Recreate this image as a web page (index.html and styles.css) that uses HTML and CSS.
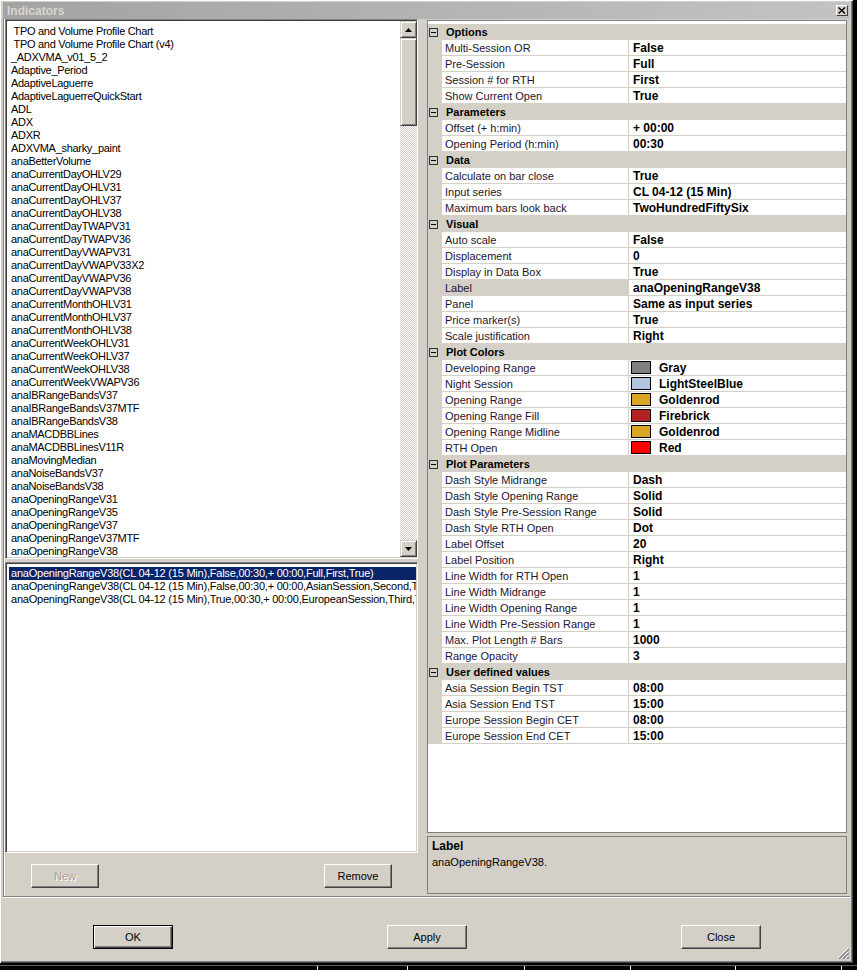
FILE: index.html
```html
<!DOCTYPE html>
<html lang="en">
<head>
  <meta charset="UTF-8" />
  <title>Indicators</title>
  <link rel="stylesheet" href="styles.css">
</head>
<body>

<div class="window">
  <div class="titlebar">
    <span class="caption">Indicators</span>
    <span class="close-btn">
      <svg width="8" height="7" viewBox="0 0 8 7"><path d="M0.5 0.5 L7 6.5 M7 0.5 L0.5 6.5" stroke="#000" stroke-width="1.4" fill="none"/></svg>
    </span>
  </div>

  <div class="main">
    <div class="left">
      <div class="listbox list-indicators">
        <div class="items">
          <div class="item"> TPO and Volume Profile Chart</div>
          <div class="item"> TPO and Volume Profile Chart (v4)</div>
          <div class="item">_ADXVMA_v01_5_2</div>
          <div class="item">Adaptive_Period</div>
          <div class="item">AdaptiveLaguerre</div>
          <div class="item">AdaptiveLaguerreQuickStart</div>
          <div class="item">ADL</div>
          <div class="item">ADX</div>
          <div class="item">ADXR</div>
          <div class="item">ADXVMA_sharky_paint</div>
          <div class="item">anaBetterVolume</div>
          <div class="item">anaCurrentDayOHLV29</div>
          <div class="item">anaCurrentDayOHLV31</div>
          <div class="item">anaCurrentDayOHLV37</div>
          <div class="item">anaCurrentDayOHLV38</div>
          <div class="item">anaCurrentDayTWAPV31</div>
          <div class="item">anaCurrentDayTWAPV36</div>
          <div class="item">anaCurrentDayVWAPV31</div>
          <div class="item">anaCurrentDayVWAPV33X2</div>
          <div class="item">anaCurrentDayVWAPV36</div>
          <div class="item">anaCurrentDayVWAPV38</div>
          <div class="item">anaCurrentMonthOHLV31</div>
          <div class="item">anaCurrentMonthOHLV37</div>
          <div class="item">anaCurrentMonthOHLV38</div>
          <div class="item">anaCurrentWeekOHLV31</div>
          <div class="item">anaCurrentWeekOHLV37</div>
          <div class="item">anaCurrentWeekOHLV38</div>
          <div class="item">anaCurrentWeekVWAPV36</div>
          <div class="item">anaIBRangeBandsV37</div>
          <div class="item">anaIBRangeBandsV37MTF</div>
          <div class="item">anaIBRangeBandsV38</div>
          <div class="item">anaMACDBBLines</div>
          <div class="item">anaMACDBBLinesV11R</div>
          <div class="item">anaMovingMedian</div>
          <div class="item">anaNoiseBandsV37</div>
          <div class="item">anaNoiseBandsV38</div>
          <div class="item">anaOpeningRangeV31</div>
          <div class="item">anaOpeningRangeV35</div>
          <div class="item">anaOpeningRangeV37</div>
          <div class="item">anaOpeningRangeV37MTF</div>
          <div class="item">anaOpeningRangeV38</div>
        </div>
        <div class="vscroll">
          <div class="sb-btn"><svg width="7" height="4" viewBox="0 0 7 4"><path d="M3.5 0 L7 4 L0 4 Z" fill="#000"/></svg></div>
          <div class="sb-thumb"></div>
          <div class="sb-track"></div>
          <div class="sb-btn"><svg width="7" height="4" viewBox="0 0 7 4"><path d="M0 0 L7 0 L3.5 4 Z" fill="#000"/></svg></div>
        </div>
      </div>

      <div class="listbox list-instances">
        <div class="items">
          <div class="item selected">anaOpeningRangeV38(CL 04-12 (15 Min),False,00:30,+ 00:00,Full,First,True)</div>
          <div class="item">anaOpeningRangeV38(CL 04-12 (15 Min),False,00:30,+ 00:00,AsianSession,Second,True)</div>
          <div class="item">anaOpeningRangeV38(CL 04-12 (15 Min),True,00:30,+ 00:00,EuropeanSession,Third,True)</div>
        </div>
      </div>

      <div class="left-buttons">
        <button class="btn" disabled>New</button>
        <button class="btn">Remove</button>
      </div>
    </div>

    <div class="right">
      <div class="propgrid">
        <div class="pg-cat"><span class="toggle"></span>Options</div>
        <div class="pg-row"><span class="pg-gutter"></span><span class="pg-name">Multi-Session OR</span><span class="pg-value">False</span></div>
        <div class="pg-row"><span class="pg-gutter"></span><span class="pg-name">Pre-Session</span><span class="pg-value">Full</span></div>
        <div class="pg-row"><span class="pg-gutter"></span><span class="pg-name">Session # for RTH</span><span class="pg-value">First</span></div>
        <div class="pg-row"><span class="pg-gutter"></span><span class="pg-name">Show Current Open</span><span class="pg-value">True</span></div>

        <div class="pg-cat"><span class="toggle"></span>Parameters</div>
        <div class="pg-row"><span class="pg-gutter"></span><span class="pg-name">Offset (+ h:min)</span><span class="pg-value">+ 00:00</span></div>
        <div class="pg-row"><span class="pg-gutter"></span><span class="pg-name">Opening Period (h:min)</span><span class="pg-value">00:30</span></div>

        <div class="pg-cat"><span class="toggle"></span>Data</div>
        <div class="pg-row"><span class="pg-gutter"></span><span class="pg-name">Calculate on bar close</span><span class="pg-value">True</span></div>
        <div class="pg-row"><span class="pg-gutter"></span><span class="pg-name">Input series</span><span class="pg-value">CL 04-12 (15 Min)</span></div>
        <div class="pg-row"><span class="pg-gutter"></span><span class="pg-name">Maximum bars look back</span><span class="pg-value">TwoHundredFiftySix</span></div>

        <div class="pg-cat"><span class="toggle"></span>Visual</div>
        <div class="pg-row"><span class="pg-gutter"></span><span class="pg-name">Auto scale</span><span class="pg-value">False</span></div>
        <div class="pg-row"><span class="pg-gutter"></span><span class="pg-name">Displacement</span><span class="pg-value">0</span></div>
        <div class="pg-row"><span class="pg-gutter"></span><span class="pg-name">Display in Data Box</span><span class="pg-value">True</span></div>
        <div class="pg-row active"><span class="pg-gutter"></span><span class="pg-name">Label</span><span class="pg-value">anaOpeningRangeV38</span></div>
        <div class="pg-row"><span class="pg-gutter"></span><span class="pg-name">Panel</span><span class="pg-value">Same as input series</span></div>
        <div class="pg-row"><span class="pg-gutter"></span><span class="pg-name">Price marker(s)</span><span class="pg-value">True</span></div>
        <div class="pg-row"><span class="pg-gutter"></span><span class="pg-name">Scale justification</span><span class="pg-value">Right</span></div>

        <div class="pg-cat"><span class="toggle"></span>Plot Colors</div>
        <div class="pg-row"><span class="pg-gutter"></span><span class="pg-name">Developing Range</span><span class="pg-value"><i class="swatch gray"></i>Gray</span></div>
        <div class="pg-row"><span class="pg-gutter"></span><span class="pg-name">Night Session</span><span class="pg-value"><i class="swatch steel"></i>LightSteelBlue</span></div>
        <div class="pg-row"><span class="pg-gutter"></span><span class="pg-name">Opening Range</span><span class="pg-value"><i class="swatch gold"></i>Goldenrod</span></div>
        <div class="pg-row"><span class="pg-gutter"></span><span class="pg-name">Opening Range Fill</span><span class="pg-value"><i class="swatch brick"></i>Firebrick</span></div>
        <div class="pg-row"><span class="pg-gutter"></span><span class="pg-name">Opening Range Midline</span><span class="pg-value"><i class="swatch gold"></i>Goldenrod</span></div>
        <div class="pg-row"><span class="pg-gutter"></span><span class="pg-name">RTH Open</span><span class="pg-value"><i class="swatch red"></i>Red</span></div>

        <div class="pg-cat"><span class="toggle"></span>Plot Parameters</div>
        <div class="pg-row"><span class="pg-gutter"></span><span class="pg-name">Dash Style Midrange</span><span class="pg-value">Dash</span></div>
        <div class="pg-row"><span class="pg-gutter"></span><span class="pg-name">Dash Style Opening Range</span><span class="pg-value">Solid</span></div>
        <div class="pg-row"><span class="pg-gutter"></span><span class="pg-name">Dash Style Pre-Session Range</span><span class="pg-value">Solid</span></div>
        <div class="pg-row"><span class="pg-gutter"></span><span class="pg-name">Dash Style RTH Open</span><span class="pg-value">Dot</span></div>
        <div class="pg-row"><span class="pg-gutter"></span><span class="pg-name">Label Offset</span><span class="pg-value">20</span></div>
        <div class="pg-row"><span class="pg-gutter"></span><span class="pg-name">Label Position</span><span class="pg-value">Right</span></div>
        <div class="pg-row"><span class="pg-gutter"></span><span class="pg-name">Line Width for RTH Open</span><span class="pg-value">1</span></div>
        <div class="pg-row"><span class="pg-gutter"></span><span class="pg-name">Line Width Midrange</span><span class="pg-value">1</span></div>
        <div class="pg-row"><span class="pg-gutter"></span><span class="pg-name">Line Width Opening Range</span><span class="pg-value">1</span></div>
        <div class="pg-row"><span class="pg-gutter"></span><span class="pg-name">Line Width Pre-Session Range</span><span class="pg-value">1</span></div>
        <div class="pg-row"><span class="pg-gutter"></span><span class="pg-name">Max. Plot Length # Bars</span><span class="pg-value">1000</span></div>
        <div class="pg-row"><span class="pg-gutter"></span><span class="pg-name">Range Opacity</span><span class="pg-value">3</span></div>

        <div class="pg-cat"><span class="toggle"></span>User defined values</div>
        <div class="pg-row"><span class="pg-gutter"></span><span class="pg-name">Asia Session Begin TST</span><span class="pg-value">08:00</span></div>
        <div class="pg-row"><span class="pg-gutter"></span><span class="pg-name">Asia Session End TST</span><span class="pg-value">15:00</span></div>
        <div class="pg-row"><span class="pg-gutter"></span><span class="pg-name">Europe Session Begin CET</span><span class="pg-value">08:00</span></div>
        <div class="pg-row"><span class="pg-gutter"></span><span class="pg-name">Europe Session End CET</span><span class="pg-value">15:00</span></div>
      </div>

      <div class="desc">
        <div class="desc-title">Label</div>
        <div class="desc-text">anaOpeningRangeV38.</div>
      </div>
    </div>
  </div>

  <div class="footer">
    <button class="btn wide default">OK</button>
    <button class="btn wide">Apply</button>
    <button class="btn wide">Close</button>
  </div>

  <svg class="grip" width="12" height="12" viewBox="0 0 12 12">
    <path d="M11 1 L1 11 M11 5 L5 11 M11 9 L9 11" stroke="#fff" stroke-width="1" fill="none"/>
    <path d="M12 2 L2 12 M12 6 L6 12 M12 10 L10 12" stroke="#808080" stroke-width="1.4" fill="none"/>
  </svg>
</div>

<div class="chart-strip"></div>

</body>
</html>
```

FILE: styles.css
```css
body {
  margin: 0;
  background: #000;
  font-family: "Liberation Sans", Arial, sans-serif;
  font-size: 11px;
  color: #000;
}

.window {
  position: relative;
  width: 853px;
  height: 963px;
  box-sizing: border-box;
  padding: 2px 3px 3px 3px;
  background: #d4d0c8;
  box-shadow: inset 1px 1px #fff, inset -1px -1px #404040, inset -2px -2px #808080;
  display: flex;
  flex-direction: column;
}

/* title bar (inactive window) */
.titlebar {
  height: 17px;
  background: linear-gradient(to right, #a3a3a3, #c3c3c3);
  display: flex;
  align-items: center;
  justify-content: space-between;
  padding: 0 2px 0 4px;
}

.titlebar .caption {
  font-weight: bold;
  font-size: 12px;
  color: #d8d5cf;
}

.close-btn {
  width: 12px;
  height: 11px;
  box-sizing: border-box;
  background: #d4d0c8;
  border: 1px solid;
  border-color: #fff #404040 #404040 #fff;
  display: flex;
  align-items: center;
  justify-content: center;
}

.main {
  display: flex;
  height: 877px;
  border-bottom: 1px solid #808080;
  box-shadow: 0 1px #fff;
}

.left {
  width: 418px;
  box-sizing: border-box;
  border-left: 1px solid #808080;
  box-shadow: inset 1px 0 #fff;
  padding: 0 3px 0 1px;
  display: flex;
  flex-direction: column;
}

.listbox {
  box-sizing: border-box;
  background: #fff;
  border: 1px solid;
  border-color: #808080 #fff #fff #808080;
  box-shadow: inset 1px 1px #404040, inset -1px -1px #d4d0c8;
  padding: 1px;
  display: flex;
  overflow: hidden;
}

.list-indicators {
  height: 540px;
}

.list-instances {
  height: 291px;
  margin-top: 3px;
}

.items {
  flex: 1;
  overflow: hidden;
}

.list-indicators .items {
  padding: 4px 0 0 4px;
}

.list-instances .items {
  padding: 3px 0 0 2px;
}

.item {
  height: 13px;
  line-height: 13px;
  white-space: pre;
  letter-spacing: -0.3px;
}

.list-instances .item {
  padding-left: 2px;
  letter-spacing: -0.22px;
}

.item.selected {
  background: #0a246a;
  color: #fff;
}

/* scrollbar */
.vscroll {
  width: 17px;
  margin-right: -1px;
  display: flex;
  flex-direction: column;
}

.sb-btn,
.sb-thumb {
  box-sizing: border-box;
  background: #d4d0c8;
  border: 1px solid;
  border-color: #d4d0c8 #404040 #404040 #d4d0c8;
  box-shadow: inset 1px 1px #fff, inset -1px -1px #808080;
}

.sb-btn {
  height: 17px;
  display: flex;
  align-items: center;
  justify-content: center;
}

.sb-thumb {
  height: 88px;
}

.sb-track {
  flex: 1;
  background: repeating-conic-gradient(#d4d0c8 0 25%, #fff 0 50%) 0 0 / 2px 2px;
}

.left-buttons {
  display: flex;
  justify-content: space-between;
  padding: 11px 26px 0;
}

.btn {
  width: 68px;
  height: 24px;
  box-sizing: border-box;
  background: #d4d0c8;
  border: 1px solid;
  border-color: #fff #404040 #404040 #fff;
  box-shadow: inset -1px -1px #808080;
  font-family: "Liberation Sans", Arial, sans-serif;
  font-size: 11px;
  color: #000;
  padding: 0;
}

.btn:disabled {
  color: #a0a0a0;
  text-shadow: 1px 1px #fff;
}

.btn.wide {
  width: 80px;
}

.btn.default {
  border-color: #000;
  box-shadow: inset 1px 1px #fff, inset -1px -1px #404040, inset -2px -2px #808080;
}

/* right side: property grid */
.right {
  flex: 1;
  padding: 1px 3px 0 6px;
  display: flex;
  flex-direction: column;
}

.propgrid {
  height: 813px;
  box-sizing: border-box;
  background: #fff;
  border: 1px solid #808080;
  padding-top: 3px;
}

.pg-cat {
  height: 16px;
  background: #d4d0c8;
  display: flex;
  align-items: center;
  padding-left: 1px;
  font-weight: bold;
}

.toggle {
  position: relative;
  width: 9px;
  height: 9px;
  box-sizing: border-box;
  border: 1px solid #303030;
  margin-right: 8px;
}

.toggle::after {
  content: "";
  position: absolute;
  left: 1px;
  top: 3px;
  width: 5px;
  height: 1px;
  background: #000;
}

.pg-row {
  display: flex;
  height: 16px;
}

.pg-gutter {
  width: 14px;
  background: #d4d0c8;
}

.pg-name,
.pg-value {
  box-sizing: border-box;
  border-bottom: 1px solid #d4d0c8;
  line-height: 16px;
  white-space: nowrap;
  overflow: hidden;
}

.pg-name {
  width: 187px;
  padding-left: 3px;
  border-right: 1px solid #d4d0c8;
  color: #24142c;
}

.pg-value {
  flex: 1;
  padding: 1px 0 0 4px;
  font-weight: bold;
  font-size: 12px;
  display: flex;
  align-items: center;
}

.pg-row.active .pg-name {
  background: #d4d0c8;
}

.swatch {
  width: 20px;
  height: 13px;
  box-sizing: border-box;
  border: 1px solid #000;
  margin: -1px 8px 0 -2px;
}

.swatch.gray { background: #808080; }
.swatch.steel { background: #b0c4de; }
.swatch.gold { background: #daa520; }
.swatch.brick { background: #b22222; }
.swatch.red { background: #ff0000; }

.desc {
  height: 58px;
  margin-top: 3px;
  box-sizing: border-box;
  border: 1px solid #808080;
  padding: 2px 4px;
  line-height: 14px;
}

.desc-title {
  font-weight: bold;
  font-size: 12px;
}

.desc-text {
  margin-top: 2px;
}

.footer {
  height: 63px;
  box-sizing: border-box;
  padding: 28px 0 0 90px;
  display: flex;
  align-items: flex-start;
  gap: 214px;
}

.grip {
  position: absolute;
  right: 4px;
  bottom: 4px;
}

.chart-strip {
  width: 857px;
  height: 7px;
  border-top: 1px solid #606060;
  margin-top: 2px;
  background:
    linear-gradient(#fff, #fff) 317px 0 / 1px 100% no-repeat,
    linear-gradient(#fff, #fff) 407px 0 / 1px 100% no-repeat,
    linear-gradient(#fff, #fff) 524px 0 / 1px 100% no-repeat,
    linear-gradient(#fff, #fff) 630px 0 / 1px 100% no-repeat,
    linear-gradient(#fff, #fff) 735px 0 / 1px 100% no-repeat,
    linear-gradient(#fff, #fff) 841px 0 / 1px 100% no-repeat;
}
```
